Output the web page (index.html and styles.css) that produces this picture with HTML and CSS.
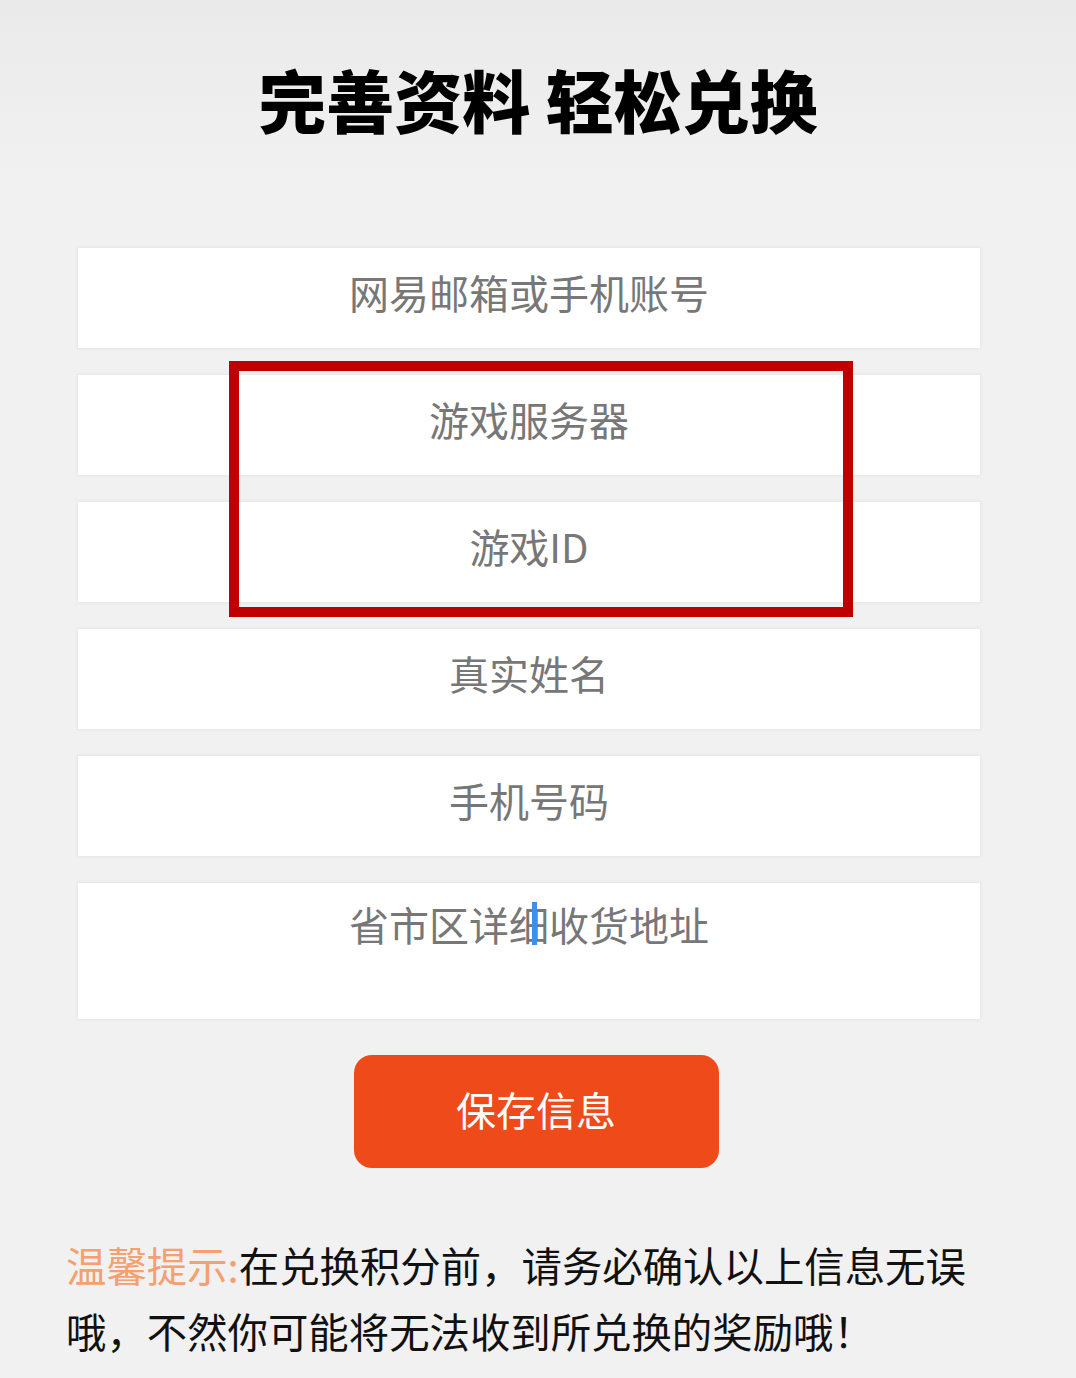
FILE: index.html
```html
<!DOCTYPE html>
<html lang="zh-CN">
<head>
<meta charset="utf-8">
<title>完善资料 轻松兑换</title>
<link rel="stylesheet" href="styles.css">
</head>
<body>
<header class="hero">
  <h1 class="title">完善资料 轻松兑换</h1>
</header>
<form class="form">
  <input class="field" type="text" placeholder="网易邮箱或手机账号">
  <input class="field" type="text" placeholder="游戏服务器">
  <input class="field" type="text" placeholder="游戏ID">
  <input class="field" type="text" placeholder="真实姓名">
  <input class="field" type="text" placeholder="手机号码">
  <div class="area-wrap">
    <textarea class="field area" placeholder="省市区详细收货地址"></textarea>
    <span class="caret"></span>
  </div>
  <button class="save" type="button">保存信息</button>
</form>
<p class="tip"><span class="tip-label">温馨提示:</span>在兑换积分前，请务必确认以上信息无误哦，不然你可能将无法收到所兑换的奖励哦！</p>
<div class="highlight"></div>
</body>
</html>
```
FILE: styles.css
```css
* { box-sizing: border-box; }
html, body { margin: 0; padding: 0; }
body {
  background: #f1f1f1;
  font-family: "Noto Sans CJK SC", "Noto Sans", sans-serif;
  width: 1076px;
  min-height: 1378px;
  position: relative;
  overflow: hidden;
}
.hero {
  height: 188px;
  background: linear-gradient(#eaeaea, #efefef 70%, #f1f1f1);
  padding-top: 63px;
  text-align: center;
}
.title {
  margin: 0;
  font-size: 68px;
  line-height: 72px;
  font-weight: 900;
  color: #000;
  letter-spacing: 0;
}
.form {
  display: flex;
  flex-direction: column;
  align-items: flex-start;
  padding: 60px 0 0 78px;
  gap: 27px;
}
.field {
  display: block;
  width: 902px;
  height: 100px;
  border: none;
  outline: none;
  background: #fff;
  box-shadow: 0 0 3px 1px rgba(0,0,0,0.05);
  font-family: "Noto Sans CJK SC", sans-serif;
  font-size: 40px;
  color: #333;
  text-align: center;
  padding: 0 0 12px;
  margin: 0;
}
.field::placeholder { color: #777; }
.area-wrap { position: relative; }
.area {
  height: 136px;
  resize: none;
  padding: 17px 0 0;
  line-height: 48px;
  overflow: hidden;
}
.caret {
  position: absolute;
  left: 454px;
  top: 19px;
  width: 5px;
  height: 43px;
  background: #3d8ef0;
}
.save {
  align-self: center;
  margin: 9px 0 0 -82px;
  width: 365px;
  height: 113px;
  border: none;
  border-radius: 18px;
  background: #ef4a19;
  color: #fff;
  font-family: "Noto Sans CJK SC", sans-serif;
  font-size: 40px;
  padding: 0 0 6px;
}
.tip {
  margin: 64px 0 0;
  padding: 0 66px;
  font-size: 40.4px;
  line-height: 66px;
  color: #111;
}
.tip-label { color: #f5a06e; }
.highlight {
  position: absolute;
  left: 229px;
  top: 361px;
  width: 624px;
  height: 256px;
  border: 10px solid #c00000;
  pointer-events: none;
}
```
